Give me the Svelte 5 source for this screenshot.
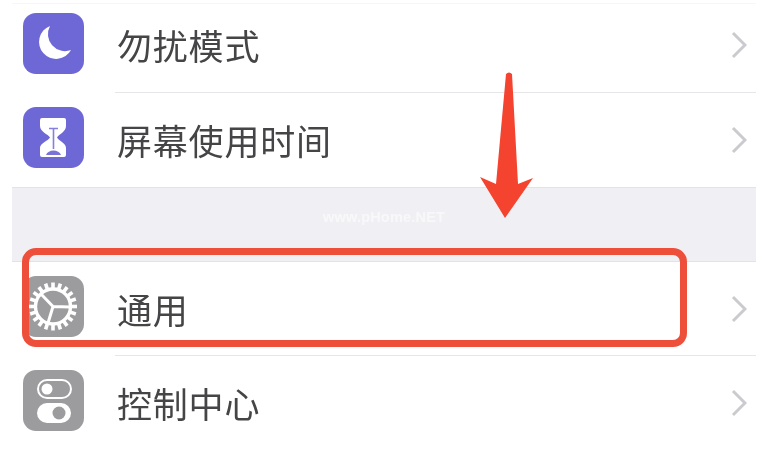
<script>
  const topRows = [
    { label: '勿扰模式', icon: 'moon', tone: 'purple' },
    { label: '屏幕使用时间', icon: 'hourglass', tone: 'purple' },
  ];
  const bottomRows = [
    { label: '通用', icon: 'gear', tone: 'grey' },
    { label: '控制中心', icon: 'switches', tone: 'grey' },
  ];
  const teeth = Array.from({ length: 20 }, (_, i) => i * 18);
</script>

{#snippet row(item)}
  <div class="row">
    <div class="icon {item.tone}">
      <svg viewBox="0 0 61 61" width="61" height="61">
        {#if item.icon === 'moon'}
          <path d="M27 13 A17 17 0 1 0 48 37 A17 17 0 0 1 27 13 Z" fill="#fff" />
        {:else if item.icon === 'hourglass'}
          <path d="M19 11 H41 Q43 11 43 13 V19 C43 25 36 27 34 30.5 C36 34 43 36 43 41 V48 Q43 50 41 50 H19 Q17 50 17 48 V41 C17 36 25 34 27 30.5 C25 27 17 25 17 19 V13 Q17 11 19 11 Z" fill="#fff" />
          <path d="M26 21.5 H35 M30.5 21.5 V42" stroke="#8580dc" stroke-width="1.6" fill="none" />
          <path d="M23 48 C25 42 36 42 38 48 Z" fill="#7a72d8" />
        {:else if item.icon === 'gear'}
          <g stroke="#fff" fill="none">
            {#each teeth as angle}
              <path d="M30 6.5 V13" stroke-width="3.6" transform="rotate({angle} 30 30.5)" />
            {/each}
            <circle cx="30" cy="30.5" r="17.5" stroke-width="3.4" />
            <path d="M30 30.5 L47 31 M30 30.5 L25 47 M30 30.5 L18 18" stroke-width="3" />
          </g>
        {:else}
          <rect x="15" y="10" width="33" height="18" rx="9" fill="none" stroke="#fff" stroke-width="2" />
          <circle cx="24" cy="19" r="5.5" fill="#fff" />
          <rect x="14" y="33" width="34" height="20" rx="10" fill="#fff" />
          <circle cx="36" cy="43" r="6.5" fill="#9c9c9f" />
        {/if}
      </svg>
    </div>
    <div class="body">
      <span class="label">{item.label}</span>
      <svg class="chevron" viewBox="0 0 16 28" width="16" height="28">
        <path d="M2 2 L14 14 L2 26" fill="none" stroke="#cbcbcf" stroke-width="3" />
      </svg>
    </div>
  </div>
{/snippet}

<div class="page">
  <div class="list">
    <section class="group first">
      {#each topRows as item}
        {@render row(item)}
      {/each}
    </section>
    <div class="gap">
      <span class="watermark">www.pHome.NET</span>
    </div>
    <section class="group">
      {#each bottomRows as item}
        {@render row(item)}
      {/each}
    </section>
  </div>

  <div class="highlight"></div>
  <svg class="arrow" viewBox="0 0 778 454" width="778" height="454">
    <path d="M506 74 Q509 71 512 74 L518 184 L533 178 L505 218 L480 177 L496 184 Z" fill="#f4432f" />
  </svg>
</div>

<style>
  :global(body) {
    margin: 0;
    background: #fff;
  }

  .page {
    position: relative;
    width: 778px;
    height: 454px;
    overflow: hidden;
    background: #fff;
    filter: blur(0.7px);
    font-family: "Noto Sans CJK SC", "Noto Sans", sans-serif;
  }

  .list {
    width: 744px;
    margin-left: 12px;
  }

  .group {
    background: #fff;
  }

  .first {
    padding-top: 3px;
  }

  .first .row:first-child {
    height: 90px;
    border-top: 1px solid #f7f7f7;
  }

  .first .row:first-child .icon {
    margin-top: 9px;
  }

  .first .row:first-child .label,
  .first .row:first-child .chevron {
    top: -3px;
  }

  .row {
    display: flex;
    height: 94px;
    padding-left: 11px;
    box-sizing: border-box;
  }

  .icon {
    flex: none;
    width: 61px;
    height: 61px;
    margin-top: 14px;
    border-radius: 13px;
    line-height: 0;
  }

  .purple {
    background: #6e68d6;
  }

  .grey {
    background: #9c9c9f;
  }

  .body {
    flex: 1;
    display: flex;
    align-items: center;
    justify-content: space-between;
    margin-left: 31px;
    padding: 0 9px 0 2px;
    border-bottom: 1px solid #e6e6e8;
    min-width: 0;
  }

  .row:last-child .body {
    border-bottom: none;
  }

  .label {
    font-size: 35px;
    line-height: 48px;
    letter-spacing: 0.8px;
    color: #454547;
    position: relative;
  }

  .chevron {
    position: relative;
  }

  .gap {
    position: relative;
    height: 73px;
    background: #f0f0f4;
    border-top: 1px solid #e3e3e6;
    border-bottom: 1px solid #e3e3e6;
  }

  .watermark {
    position: absolute;
    left: 311px;
    top: 21px;
    font-family: "Liberation Sans", sans-serif;
    font-size: 14.5px;
    font-weight: 700;
    letter-spacing: 0.2px;
    color: rgba(255, 255, 255, 0.55);
  }

  .highlight {
    position: absolute;
    left: 22px;
    top: 248px;
    width: 665px;
    height: 99px;
    box-sizing: border-box;
    border: 7px solid #ee4f3a;
    border-radius: 14px;
  }

  .arrow {
    position: absolute;
    left: 0;
    top: 0;
  }
</style>
